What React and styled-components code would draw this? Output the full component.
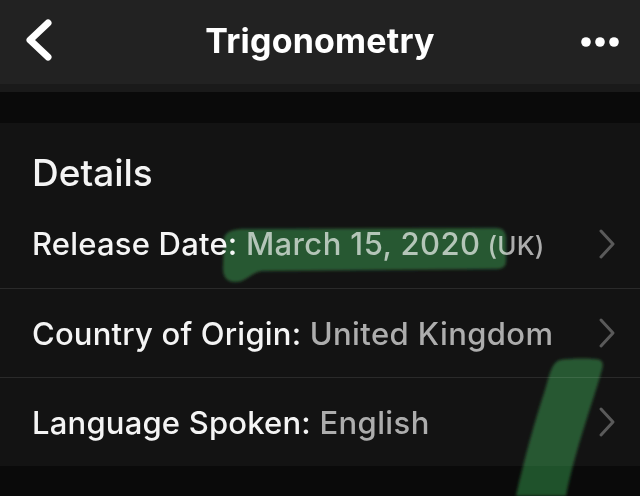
import styled, { createGlobalStyle } from 'styled-components'

const GlobalStyle = createGlobalStyle`
  html, body {
    margin: 0;
    padding: 0;
    background: #0a0a0a;
  }
  body {
    font-family: Inter, "Liberation Sans", sans-serif;
    -webkit-font-smoothing: antialiased;
  }
`

const Screen = styled.div`
  position: relative;
  width: 640px;
  height: 496px;
  overflow: hidden;
  background: #0a0a0a;
  display: flex;
  flex-direction: column;
`

const NavBar = styled.header`
  height: 84px;
  flex-shrink: 0;
  background: #222222;
  display: grid;
  grid-template-columns: 120px 1fr 120px;
  align-items: center;
  padding: 0 20px;
  box-sizing: border-box;
`

const NavTitle = styled.h1`
  margin: 0;
  text-align: center;
  color: #ffffff;
  font-size: 34px;
  font-weight: 700;
  letter-spacing: 0.2px;
  padding-bottom: 4px;
`

const NavButton = styled.button`
  background: transparent;
  border: none;
  padding: 0;
  display: flex;
  align-items: center;
  justify-content: ${({ end }) => (end ? 'flex-end' : 'flex-start')};
  height: 84px;
  cursor: pointer;
`

const Gap = styled.div`
  height: 39px;
  flex-shrink: 0;
  background: linear-gradient(#1a1a1a 0 8px, #0a0a0a 8px);
`

const Card = styled.section`
  background: #131313;
  display: flex;
  flex-direction: column;
`

const SectionTitle = styled.h2`
  margin: 0;
  height: 76px;
  box-sizing: border-box;
  padding: 28px 32px 0;
  color: #f4f4f4;
  font-size: 37px;
  font-weight: 500;
  line-height: 1.2;
`

const Row = styled.div`
  height: ${({ first }) => (first ? '89px' : '88px')};
  border-top: ${({ first }) => (first ? 'none' : '1px solid #2a2a2a')};
  display: flex;
  align-items: center;
  justify-content: space-between;
  padding: 0 24px 0 32px;
`

const RowText = styled.div`
  font-size: 31px;
  font-weight: 500;
  letter-spacing: 0.2px;
  color: #f4f4f4;
  white-space: nowrap;
`

const Value = styled.span`
  color: #adadad;
  font-weight: 500;
  letter-spacing: 0.4px;
`

const Small = styled.span`
  font-size: 26px;
  color: #adadad;
`

const Highlight = styled.svg`
  position: absolute;
  inset: 0;
  pointer-events: none;
  mix-blend-mode: screen;
`

function Chevron() {
  return (
    <svg width="18" height="32" viewBox="0 0 18 32">
      <path d="M3 3 L15 16 L3 29" fill="none" stroke="#5a5a5a" strokeWidth="3" strokeLinecap="round" strokeLinejoin="round" />
    </svg>
  )
}

const rows = [
  { label: 'Release Date:', value: 'March 15, 2020', extra: '(UK)' },
  { label: 'Country of Origin:', value: 'United Kingdom' },
  { label: 'Language Spoken:', value: 'English' },
]

export default function App() {
  return (
    <>
      <GlobalStyle />
      <Screen>
        <NavBar>
          <NavButton aria-label="Back">
            <svg width="34" height="46" viewBox="0 0 34 46">
              <path d="M28 4 L10 21 L28 38" fill="none" stroke="#ffffff" strokeWidth="7" strokeLinecap="round" strokeLinejoin="round" />
            </svg>
          </NavButton>
          <NavTitle>Trigonometry</NavTitle>
          <NavButton end aria-label="More">
            <svg width="40" height="12" viewBox="0 0 40 12">
              <circle cx="6" cy="6" r="4.8" fill="#ffffff" />
              <circle cx="20" cy="6" r="4.8" fill="#ffffff" />
              <circle cx="34" cy="6" r="4.8" fill="#ffffff" />
            </svg>
          </NavButton>
        </NavBar>
        <Gap />
        <Card>
          <SectionTitle>Details</SectionTitle>
          {rows.map((row, i) => (
            <Row key={row.label} first={i === 0}>
              <RowText>
                {row.label} <Value>{row.value}</Value>
                {row.extra && <Small> {row.extra}</Small>}
              </RowText>
              <Chevron />
            </Row>
          ))}
        </Card>
        <Highlight width="640" height="496" viewBox="0 0 640 496">
          <defs>
            <filter id="soft">
              <feGaussianBlur stdDeviation="1.4" />
            </filter>
          </defs>
          <g fill="rgb(24,76,33)" filter="url(#soft)">
            <path d="M224 238 C226 231 234 229 246 229 L496 228 C503 228 506 232 506 238 L506 261 C506 267 502 269 496 269 L262 271 C252 272 246 282 235 282 C227 282 223 277 223 268 Z" />
            <path d="M560 360 C572 358 594 358 600 360 C604 362 603 367 601 373 C593 402 575 450 566 496 L516 496 C524 460 535 420 545 390 C550 373 552 362 560 360 Z" />
          </g>
        </Highlight>
      </Screen>
    </>
  )
}
